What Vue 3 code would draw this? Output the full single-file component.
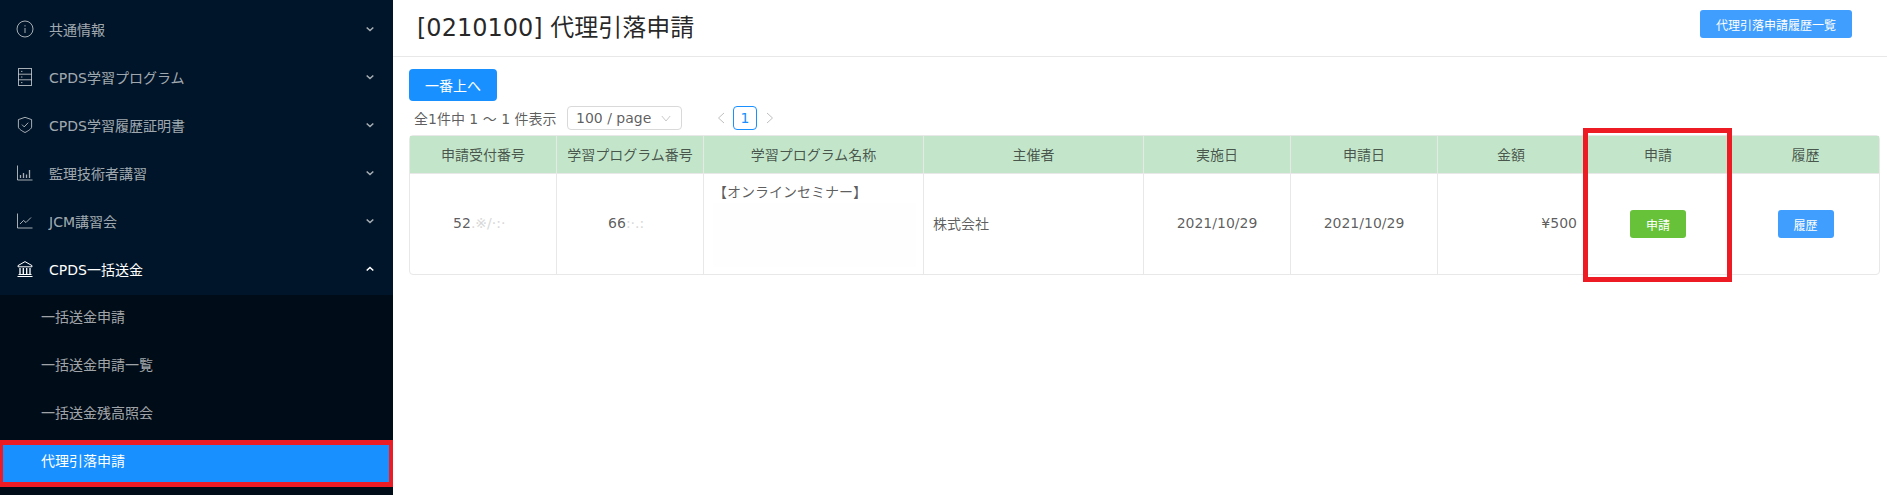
<template>
  <div class="layout">
    <aside class="sider">
      <ul class="menu">
        <li v-for="item in menus" :key="item.label" class="menu-item" :class="{ open: item.open }">
          <svg class="icon" viewBox="0 0 16 16" fill="none" stroke="currentColor" stroke-width="1">
            <g v-if="item.icon === 'info'">
              <circle cx="8" cy="8" r="8" />
              <path d="M8 7v5M8 4.200v1.300" />
            </g>
            <g v-else-if="item.icon === 'server'">
              <rect x="1.500" y="-0.500" width="13" height="17" />
              <path d="M1.500 5.200h13M1.500 10.800h13M4 2.400h1.400M4 8h1.400M4 13.600h1.400" />
            </g>
            <g v-else-if="item.icon === 'shield'">
              <path d="M8 .3l6.600 2.300v7.500c0 1.600-3.800 4.100-6.600 5.400-2.800-1.300-6.600-3.800-6.600-5.400V2.600z" />
              <path d="M5 7.600l2.200 2.300 4-4.200" />
            </g>
            <g v-else-if="item.icon === 'bar'">
              <path d="M.5 .5v14.500h15" />
              <path d="M3.500 13v-3M6.500 13V8M9.500 13V9.500M12.500 13V5" stroke-width="1.300" />
            </g>
            <g v-else-if="item.icon === 'line'">
              <path d="M.5 .5v14.500h15" />
              <path d="M3 11l3.500-3.500 2.500 2 5-5" />
            </g>
            <g v-else>
              <path d="M8 .6L1 4.600v1.200h14V4.600z" />
              <path d="M3 7v6M6.300 7v6M9.700 7v6M13 7v6" stroke-width="1.300" />
              <path d="M1.500 13.500h13M.5 15.500h15" />
            </g>
          </svg>
          <span class="menu-label">{{ item.label }}</span>
          <svg class="arrow" viewBox="0 0 8 6" fill="none" stroke="currentColor" stroke-width="1.600">
            <path :d="item.open ? 'M.7 4.500L4 1.500l3.300 3' : 'M.7 1.500L4 4.500l3.300-3'" />
          </svg>
        </li>
      </ul>
      <ul class="submenu">
        <li v-for="sub in subMenus" :key="sub" class="sub-item" :class="{ active: sub === activeSub }">
          {{ sub }}
          <span v-if="sub === activeSub" class="mark mark-menu"></span>
        </li>
      </ul>
    </aside>

    <main class="main">
      <header class="page-head">
        <h1>[0210100] 代理引落申請</h1>
        <button class="btn btn-small btn-blue head-btn">代理引落申請履歴一覧</button>
      </header>

      <section class="content">
        <button class="btn-top">一番上へ</button>

        <div class="pager">
          <span class="total">全1件中 1 ～ 1 件表示</span>
          <div class="select">
            <span>100 / page</span>
            <svg viewBox="0 0 12 8" fill="none" stroke="#bfbfbf" stroke-width="1"><path d="M1 1l5 6 5-6" /></svg>
          </div>
          <svg class="page-arrow prev" viewBox="0 0 8 12" fill="none" stroke="#bfbfbf" stroke-width="1"><path d="M7 1L1.500 6 7 11" /></svg>
          <span class="page-no">1</span>
          <svg class="page-arrow" viewBox="0 0 8 12" fill="none" stroke="#bfbfbf" stroke-width="1"><path d="M1 1l5.500 5L1 11" /></svg>
        </div>

        <div class="table-wrap">
          <table>
            <colgroup>
              <col v-for="(w, i) in colWidths" :key="i" :style="{ width: w + 'px' }" />
            </colgroup>
            <thead>
              <tr>
                <th v-for="h in headers" :key="h">{{ h }}</th>
              </tr>
            </thead>
            <tbody>
              <tr>
                <td class="center text-up">52<span class="blur blur-long">.※/·:·</span></td>
                <td class="center text-up">66<span class="blur blur-short">:·.:</span></td>
                <td class="cell">
                  <div class="name">【オンラインセミナー】</div>
                  <div class="name-hidden"></div>
                </td>
                <td class="cell text-up">株式会社</td>
                <td class="center text-up">2021/10/29</td>
                <td class="center text-up">2021/10/29</td>
                <td class="cell price text-up">¥500</td>
                <td class="center"><button class="btn btn-small btn-green">申請</button></td>
                <td class="center"><button class="btn btn-small btn-blue">履歴</button></td>
              </tr>
            </tbody>
          </table>
          <span class="mark mark-col"></span>
        </div>
      </section>
    </main>
  </div>
</template>

<script setup>
const menus = [
  { label: '共通情報', icon: 'info' },
  { label: 'CPDS学習プログラム', icon: 'server' },
  { label: 'CPDS学習履歴証明書', icon: 'shield' },
  { label: '監理技術者講習', icon: 'bar' },
  { label: 'JCM講習会', icon: 'line' },
  { label: 'CPDS一括送金', icon: 'bank', open: true },
]

const subMenus = ['一括送金申請', '一括送金申請一覧', '一括送金残高照会', '代理引落申請']
const activeSub = '代理引落申請'

const headers = ['申請受付番号', '学習プログラム番号', '学習プログラム名称', '主催者', '実施日', '申請日', '金額', '申請', '履歴']
const colWidths = [147, 147, 220, 220, 147, 147, 147, 147, 147]
</script>

<style>
html,
body {
  margin: 0;
  overflow: hidden;
  background: #fff;
}
</style>

<style scoped>
.layout {
  display: flex;
  height: 495px;
  font-family: "DejaVu Sans", "Noto Sans CJK JP", sans-serif;
  font-size: 14px;
}

ul {
  list-style: none;
  margin: 0;
  padding: 0;
}

.sider {
  width: 393px;
  flex: none;
  background: #000c17;
  overflow: hidden;
}

.menu {
  background: #001529;
  padding: 9px 0 6px;
}

.menu-item {
  display: flex;
  align-items: center;
  height: 40px;
  margin-bottom: 8px;
  padding: 0 19px 0 17px;
  color: rgba(255, 255, 255, 0.65);
}

.menu-item:last-child {
  margin-bottom: 0;
}

.menu-item.open {
  color: #fff;
}

.icon {
  width: 16px;
  height: 16px;
  margin-right: 16px;
  flex: none;
  overflow: visible;
}

.menu-label {
  flex: 1;
}

.arrow {
  width: 8px;
  height: 6px;
  flex: none;
}

.submenu {
  padding-top: 3px;
}

.sub-item {
  position: relative;
  height: 40px;
  line-height: 38px;
  margin-bottom: 8px;
  padding-left: 41px;
  color: rgba(255, 255, 255, 0.65);
}

.sub-item.active {
  background: #1890ff;
  color: #fff;
}

.mark {
  position: absolute;
  border: solid #ed1c24;
  box-sizing: border-box;
  pointer-events: none;
}

.mark-menu {
  top: -2px;
  left: 0;
  right: 0;
  bottom: -5px;
  border-width: 5px 4px 5px 3px;
}

.main {
  flex: 1;
  min-width: 0;
}

.page-head {
  display: flex;
  align-items: flex-start;
  justify-content: space-between;
  height: 57px;
  box-sizing: border-box;
  border-bottom: 1px solid #e8e8e8;
  padding: 10px 35px 0 24px;
}

h1 {
  margin: 2px 0 0;
  font-size: 24px;
  font-weight: 400;
  line-height: 32px;
  color: rgba(0, 0, 0, 0.85);
}

.btn {
  border: 0;
  font-family: inherit;
  color: #fff;
}

.btn-small {
  height: 28px;
  width: 56px;
  padding: 0;
  font-size: 12px;
  border-radius: 3px;
}

.head-btn {
  width: 152px;
}

.btn-blue {
  background: #409eff;
}

.btn-green {
  background: #67c23a;
}

.content {
  padding: 12px 7px 0 16px;
}

.btn-top {
  display: block;
  width: 88px;
  height: 32px;
  padding: 0;
  border: 0;
  border-radius: 4px;
  background: #1890ff;
  color: #fff;
  font-family: inherit;
  font-size: 14px;
}

.pager {
  display: flex;
  align-items: center;
  height: 24px;
  margin: 5px 0;
  color: rgba(0, 0, 0, 0.65);
}

.total {
  margin-left: 5px;
  width: 153px;
}

.select {
  display: flex;
  align-items: center;
  justify-content: space-between;
  box-sizing: border-box;
  width: 115px;
  height: 24px;
  padding: 0 10px 0 8px;
  border: 1px solid #d9d9d9;
  border-radius: 4px;
}

.select svg {
  width: 10px;
  height: 7px;
}

.page-arrow {
  width: 8px;
  height: 12px;
  flex: none;
}

.prev {
  margin-left: 35px;
  margin-right: 8px;
}

.page-no {
  box-sizing: border-box;
  width: 24px;
  height: 24px;
  line-height: 22px;
  margin-right: 9px;
  text-align: center;
  border: 1px solid #1890ff;
  border-radius: 4px;
  color: #1890ff;
}

.table-wrap {
  position: relative;
  width: 1471px;
  box-sizing: border-box;
  border: 1px solid #e8e8e8;
  border-radius: 4px;
}

table {
  width: 100%;
  table-layout: fixed;
  border-collapse: separate;
  border-spacing: 0;
  color: rgba(0, 0, 0, 0.65);
}

th {
  box-sizing: border-box;
  height: 38px;
  padding: 0 0 2px;
  background: #c3e6cb;
  font-weight: 400;
  text-align: center;
  border-bottom: 1px solid #e8e8e8;
  border-right: 1px solid #e8e8e8;
}

td {
  box-sizing: border-box;
  height: 100px;
  padding: 0;
  border-right: 1px solid #e8e8e8;
}

th:last-child,
td:last-child {
  border-right: 0;
}

.cell {
  padding: 0 7px 0 9px;
}

.text-up {
  padding-bottom: 2px;
}

.center {
  text-align: center;
}

.price {
  text-align: right;
}

.blur {
  display: inline-block;
  color: #d8d8d8;
  text-align: left;
}

.blur-long {
  width: 42px;
}

.blur-short {
  width: 26px;
}

.name {
  line-height: 21px;
}

.name-hidden {
  height: 64px;
  background: #fefefe;
}

.mark-col {
  top: -8px;
  left: 1173px;
  width: 149px;
  height: 154px;
  border-width: 5px;
}
</style>
